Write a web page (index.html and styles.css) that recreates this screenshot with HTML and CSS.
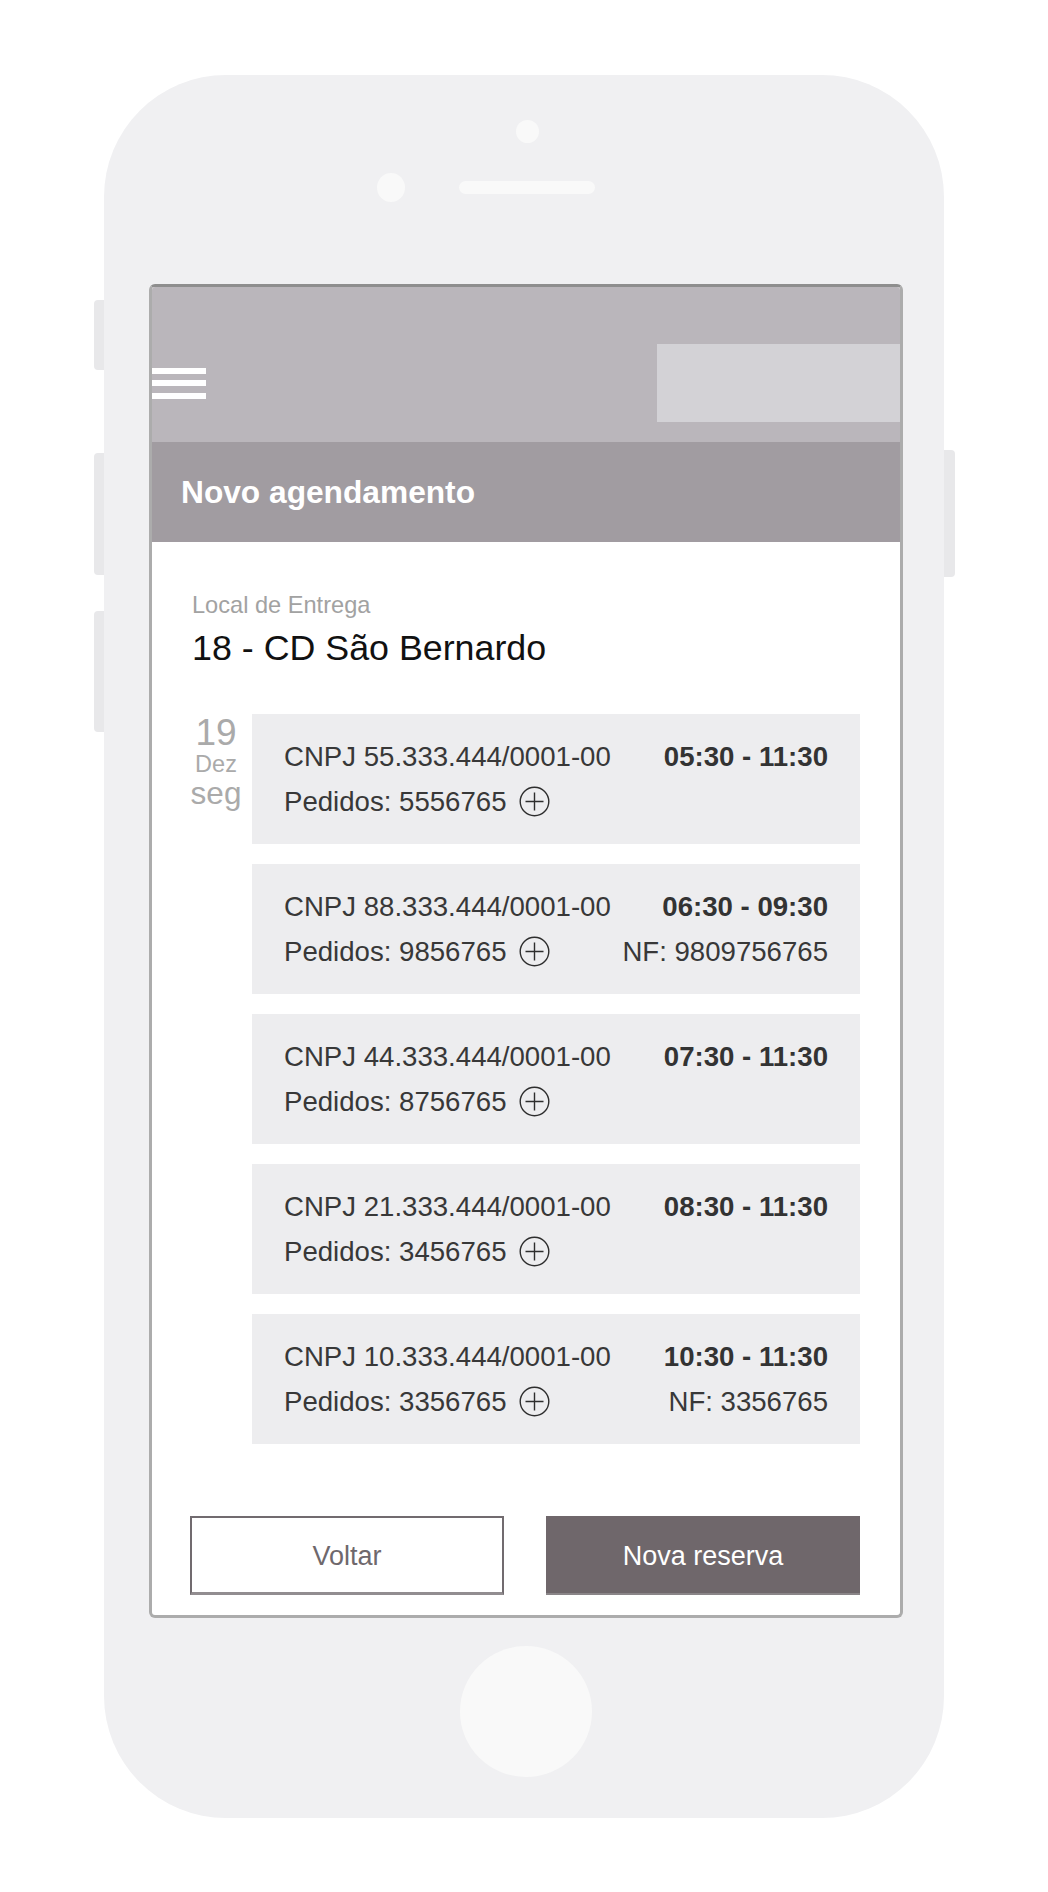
FILE: index.html
```html
<!DOCTYPE html>
<html lang="pt-BR">
<head>
<meta charset="utf-8">
<title>Novo agendamento</title>
<link rel="stylesheet" href="styles.css">
</head>
<body>
<div class="phone">
  <span class="side side-l1"></span>
  <span class="side side-l2"></span>
  <span class="side side-l3"></span>
  <span class="side side-r1"></span>
  <span class="cam"></span>
  <span class="sensor"></span>
  <span class="speaker"></span>

  <div class="screen">
    <header class="topbar">
      <div class="burger"><span></span><span></span><span></span></div>
      <div class="logo-slot"></div>
    </header>
    <div class="titlebar"><h1>Novo agendamento</h1></div>

    <main class="content">
      <p class="label">Local de Entrega</p>
      <p class="place">18 - CD São Bernardo</p>

      <div class="schedule">
        <div class="date">
          <span class="day">19</span>
          <span class="mon">Dez</span>
          <span class="wd">seg</span>
        </div>
        <ul class="slots">
          <li class="slot">
            <div class="row"><span>CNPJ 55.333.444/0001-00</span><strong>05:30 - 11:30</strong></div>
            <div class="row"><span class="orders">Pedidos: 5556765<svg class="plus" viewBox="0 0 31 31"><circle cx="15.5" cy="15.5" r="14.3"/><path d="M6.5 15.5h18M15.5 6.5v18"/></svg></span></div>
          </li>
          <li class="slot">
            <div class="row"><span>CNPJ 88.333.444/0001-00</span><strong>06:30 - 09:30</strong></div>
            <div class="row"><span class="orders">Pedidos: 9856765<svg class="plus" viewBox="0 0 31 31"><circle cx="15.5" cy="15.5" r="14.3"/><path d="M6.5 15.5h18M15.5 6.5v18"/></svg></span><span>NF: 9809756765</span></div>
          </li>
          <li class="slot">
            <div class="row"><span>CNPJ 44.333.444/0001-00</span><strong>07:30 - 11:30</strong></div>
            <div class="row"><span class="orders">Pedidos: 8756765<svg class="plus" viewBox="0 0 31 31"><circle cx="15.5" cy="15.5" r="14.3"/><path d="M6.5 15.5h18M15.5 6.5v18"/></svg></span></div>
          </li>
          <li class="slot">
            <div class="row"><span>CNPJ 21.333.444/0001-00</span><strong>08:30 - 11:30</strong></div>
            <div class="row"><span class="orders">Pedidos: 3456765<svg class="plus" viewBox="0 0 31 31"><circle cx="15.5" cy="15.5" r="14.3"/><path d="M6.5 15.5h18M15.5 6.5v18"/></svg></span></div>
          </li>
          <li class="slot">
            <div class="row"><span>CNPJ 10.333.444/0001-00</span><strong>10:30 - 11:30</strong></div>
            <div class="row"><span class="orders">Pedidos: 3356765<svg class="plus" viewBox="0 0 31 31"><circle cx="15.5" cy="15.5" r="14.3"/><path d="M6.5 15.5h18M15.5 6.5v18"/></svg></span><span>NF: 3356765</span></div>
          </li>
        </ul>
      </div>

      <div class="actions">
        <button class="btn btn-outline" type="button">Voltar</button>
        <button class="btn btn-solid" type="button">Nova reserva</button>
      </div>
    </main>
  </div>

  <div class="home"></div>
</div>
</body>
</html>
```
FILE: styles.css
```css
* { box-sizing: border-box; }

html, body {
  margin: 0;
  padding: 0;
  background: #ffffff;
  font-family: "Liberation Sans", Arial, sans-serif;
}

.phone {
  position: relative;
  width: 840px;
  height: 1743px;
  margin: 75px 0 0 104px;
  padding: 209px 42px 0 45px;
  background: #f0f0f2;
  border-radius: 122px;
}

.side {
  position: absolute;
  width: 10px;
  background: #e8e8ea;
}
.side-l1 { left: -10px; top: 225px; height: 70px; border-radius: 4px 0 0 4px; }
.side-l2 { left: -10px; top: 378px; height: 122px; border-radius: 4px 0 0 4px; }
.side-l3 { left: -10px; top: 536px; height: 121px; border-radius: 4px 0 0 4px; }
.side-r1 { left: 840px; top: 375px; width: 11px; height: 127px; border-radius: 0 4px 4px 0; }

.cam {
  position: absolute;
  left: 412px;
  top: 45px;
  width: 23px;
  height: 23px;
  border-radius: 50%;
  background: #f9f9f9;
}
.sensor {
  position: absolute;
  left: 273px;
  top: 98px;
  width: 28px;
  height: 29px;
  border-radius: 50%;
  background: #f9f9f9;
}
.speaker {
  position: absolute;
  left: 355px;
  top: 106px;
  width: 136px;
  height: 13px;
  border-radius: 7px;
  background: #f9f9f9;
}

.screen {
  width: 754px;
  height: 1334px;
  background: #ffffff;
  border: 3px solid #acacac;
  border-top-color: #8e8e8e;
  border-radius: 6px;
  overflow: hidden;
  display: flex;
  flex-direction: column;
}

.topbar {
  height: 155px;
  padding-top: 37px;
  background: #bab6bb;
  display: flex;
  align-items: center;
  justify-content: space-between;
}
.burger {
  width: 54px;
  display: flex;
  flex-direction: column;
  gap: 6.5px;
}
.burger span {
  display: block;
  height: 6px;
  background: #ffffff;
}
.logo-slot {
  width: 243px;
  height: 78px;
  background: #d3d2d6;
}

.titlebar {
  height: 100px;
  padding-left: 29px;
  background: #a19ca1;
  display: flex;
  align-items: center;
}
.titlebar h1 {
  margin: 0;
  font-size: 31.7px;
  line-height: 36px;
  font-weight: bold;
  color: #ffffff;
}

.content {
  flex: 1;
  padding: 49px 40px 20px 40px;
  display: flex;
  flex-direction: column;
}
.label {
  margin: 0;
  font-size: 23.6px;
  line-height: 28px;
  color: #a2a2a2;
}
.place {
  margin: 8px 0 0;
  font-size: 35.8px;
  line-height: 42px;
  color: #111111;
}

.schedule {
  margin-top: 45px;
  display: grid;
  grid-template-columns: 48px 608px;
  column-gap: 12px;
  align-items: start;
}
.date {
  display: flex;
  flex-direction: column;
  align-items: center;
  color: #aaaaaa;
}
.date span { display: block; white-space: nowrap; }
.day { font-size: 37px; line-height: 37px; }
.mon { font-size: 23.5px; line-height: 23.5px; margin-top: 2px; }
.wd  { font-size: 31.5px; line-height: 31.5px; margin-top: 1px; }

.slots {
  list-style: none;
  margin: 0;
  padding: 0;
  display: flex;
  flex-direction: column;
  gap: 20px;
}
.slot {
  height: 130px;
  padding: 20px 32px 20px 32px;
  background: #ededef;
  color: #383838;
  font-size: 27.6px;
  line-height: 45px;
}
.row {
  display: flex;
  justify-content: space-between;
  align-items: center;
  white-space: nowrap;
}
.row strong {
  font-weight: bold;
  color: #333333;
}
.orders {
  display: inline-flex;
  align-items: center;
}
.plus {
  width: 31px;
  height: 31px;
  margin-left: 13px;
  fill: none;
  stroke: #2e2e2e;
  stroke-width: 1.4;
}

.actions {
  margin-top: 72px;
  margin-left: -2px;
  display: flex;
  gap: 42px;
}
.btn {
  width: 314px;
  height: 79px;
  margin: 0;
  padding: 3px 0 0;
  font-family: "Liberation Sans", Arial, sans-serif;
  font-size: 27px;
  border-radius: 0;
  cursor: pointer;
}
.btn-outline {
  background: #ffffff;
  color: #6f686c;
  border: 2px solid #716b6f;
  border-bottom: 3px solid #928d90;
}
.btn-solid {
  background: #6f676b;
  color: #ffffff;
  border: 0;
  border-bottom: 2px solid #8a8588;
}

.home {
  width: 132px;
  height: 131px;
  margin: 28px auto 0;
  border-radius: 50%;
  background: #f9f9f9;
}
```
